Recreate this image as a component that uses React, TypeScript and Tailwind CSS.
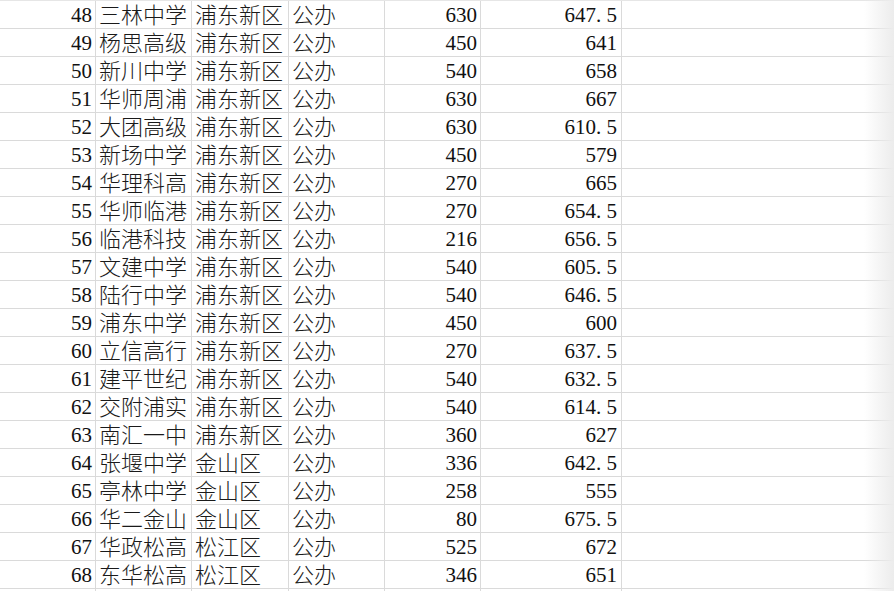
import React from 'react';

type Row = [number, string, string, string, number, string];

const rows: Row[] = [
  [48, '三林中学', '浦东新区', '公办', 630, '647.5'],
  [49, '杨思高级', '浦东新区', '公办', 450, '641'],
  [50, '新川中学', '浦东新区', '公办', 540, '658'],
  [51, '华师周浦', '浦东新区', '公办', 630, '667'],
  [52, '大团高级', '浦东新区', '公办', 630, '610.5'],
  [53, '新场中学', '浦东新区', '公办', 450, '579'],
  [54, '华理科高', '浦东新区', '公办', 270, '665'],
  [55, '华师临港', '浦东新区', '公办', 270, '654.5'],
  [56, '临港科技', '浦东新区', '公办', 216, '656.5'],
  [57, '文建中学', '浦东新区', '公办', 540, '605.5'],
  [58, '陆行中学', '浦东新区', '公办', 540, '646.5'],
  [59, '浦东中学', '浦东新区', '公办', 450, '600'],
  [60, '立信高行', '浦东新区', '公办', 270, '637.5'],
  [61, '建平世纪', '浦东新区', '公办', 540, '632.5'],
  [62, '交附浦实', '浦东新区', '公办', 540, '614.5'],
  [63, '南汇一中', '浦东新区', '公办', 360, '627'],
  [64, '张堰中学', '金山区', '公办', 336, '642.5'],
  [65, '亭林中学', '金山区', '公办', 258, '555'],
  [66, '华二金山', '金山区', '公办', 80, '675.5'],
  [67, '华政松高', '松江区', '公办', 525, '672'],
  [68, '东华松高', '松江区', '公办', 346, '651'],
];

// SimSun-style half-width digits: keep the decimal point one digit wide
const Num: React.FC<{ value: string }> = ({ value }) => {
  const [a, b] = value.split('.');
  if (b === undefined) return <>{a}</>;
  return (
    <>
      {a}
      <span className="inline-block w-[10.5px] text-left">.</span>
      {b}
    </>
  );
};

const cell = 'h-full border-r border-[#dadada] flex items-center whitespace-nowrap overflow-hidden pt-[2px]';
const cjk = 'text-[22px] font-light text-[#1a1a1a]';

export default function App() {
  return (
    <div
      className="relative w-[894px] h-[591px] overflow-hidden bg-white text-[#111] text-[21px] leading-none"
      style={{ fontFamily: '"Liberation Serif", "Noto Sans CJK SC", serif' }}
    >
      <div className="border-t border-[#e6e6e6]">
        {[...rows, null].map((r, i) => (
          <div
            key={i}
            className="grid grid-cols-[96px_96px_97px_96px_96px_141px_1fr] h-[28px] border-b border-[#dadada]"
          >
            <div className={`${cell} justify-end pr-[3px]`}>{r ? r[0] : ''}</div>
            <div className={`${cell} ${cjk} pl-[3px]`}>{r ? r[1] : ''}</div>
            <div className={`${cell} ${cjk} pl-[3px]`}>{r ? r[2] : ''}</div>
            <div className={`${cell} ${cjk} pl-[3px]`}>{r ? r[3] : ''}</div>
            <div className={`${cell} justify-end pr-[3px]`}>{r ? r[4] : ''}</div>
            <div className={`${cell} justify-end pr-[4px]`}>{r ? <Num value={r[5]} /> : ''}</div>
            <div className="h-full" />
          </div>
        ))}
      </div>
      <div className="pointer-events-none absolute top-0 right-0 h-full w-[30px] bg-gradient-to-r from-transparent to-[#ececec]" />
    </div>
  );
}
